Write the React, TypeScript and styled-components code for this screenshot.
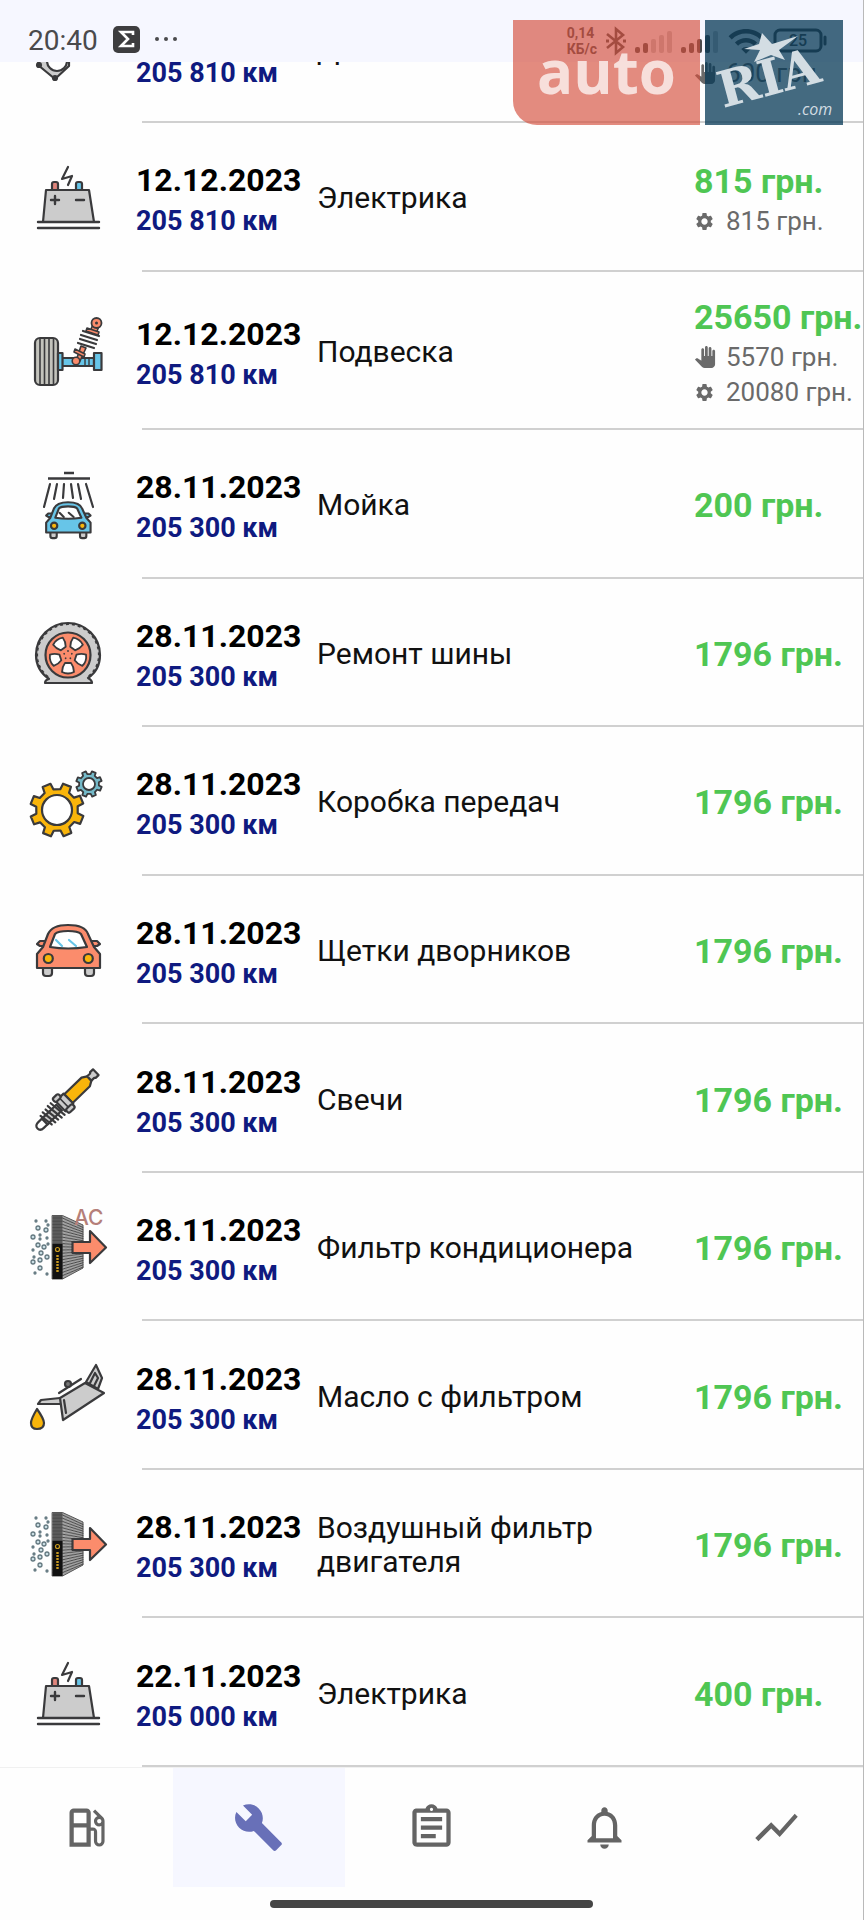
import React from 'react'
import styled, { createGlobalStyle } from 'styled-components'
import {
  MdBuild,
  MdNotificationsNone,
  MdOutlineAssignment,
  MdOutlineLocalGasStation,
  MdPanTool,
  MdSettings,
  MdShowChart,
  MdWifi,
} from 'react-icons/md'

const COLORS = {
  ink: '#3a3a3c',
  grey: '#cccccc',
  coral: '#fb8c6c',
  blue: '#67c5e8',
  teal: '#74b9c8',
  yellow: '#f9b50b',
  green: '#4fc653',
  navy: '#0f1a80',
  muted: '#6a6a6a',
  tint: '#f6f7ff',
  divider: '#d0d0d0',
}

const GlobalStyle = createGlobalStyle`
  * {
    box-sizing: border-box;
  }

  body {
    margin: 0;
    background: #fefefe;
    font-family: Roboto, 'Liberation Sans', sans-serif;
  }
`

const Page = styled.div`
  position: relative;
  display: flex;
  flex-direction: column;
  min-height: 100vh;
  overflow: hidden;
  border-right: 1px solid #b9b9b9;
`

const StatusBar = styled.header`
  display: flex;
  align-items: center;
  justify-content: space-between;
  height: 62px;
  padding: 20px 36px 0 28px;
  background: ${COLORS.tint};
  color: #4a4a4c;
`

const StatusGroup = styled.div<{ $gap: number }>`
  display: flex;
  align-items: center;
  gap: ${({ $gap }) => $gap}px;
`

const Clock = styled.time`
  font-size: 28px;
  line-height: 32px;
`

const Speed = styled.div`
  font-size: 14px;
  font-weight: 700;
  line-height: 16px;
`

const Watermark = styled.div`
  position: absolute;
  top: 20px;
  right: 20px;
  display: flex;
  gap: 5px;
  height: 105px;
`

const AutoBox = styled.div`
  display: flex;
  align-items: center;
  justify-content: center;
  width: 187px;
  padding-bottom: 4px;
  border-bottom-left-radius: 24px;
  background: rgba(212, 77, 58, 0.65);
  color: rgba(255, 255, 255, 0.72);
  font-family: 'Open Sans', sans-serif;
  font-size: 60px;
  font-weight: 700;
  line-height: 84px;
`

const RiaBox = styled.div`
  width: 138px;
  background: rgba(6, 56, 85, 0.75);
`

const List = styled.ul`
  display: flex;
  flex: 1;
  flex-direction: column;
  margin: 0;
  padding: 0;
  list-style: none;
`

const Item = styled.li<{ $scrolled?: boolean }>`
  display: flex;
  flex: ${({ $scrolled }) => ($scrolled ? '0 0 61px' : '1 0 auto')};
  flex-direction: column;
  justify-content: flex-end;
  overflow: hidden;
`

const Row = styled.div`
  display: grid;
  flex: 1 0 auto;
  grid-template-columns: 136px 181px minmax(0, 1fr) 169px;
  align-items: center;
  min-height: 146px;
  padding: 22px 0 18px;
`

const Divider = styled.div`
  flex: none;
  height: 2px;
  margin-left: 142px;
  background: ${COLORS.divider};
`

const IconCell = styled.div`
  padding: 0 0 4px 26px;

  svg {
    display: block;
  }
`

const When = styled.div`
  padding-top: 4px;
  white-space: nowrap;
`

const DateText = styled.div`
  min-height: 42px;
  color: #000;
  font-size: 32px;
  font-weight: 700;
  line-height: 42px;
`

const Mileage = styled.div`
  color: ${COLORS.navy};
  font-size: 27px;
  font-weight: 700;
  line-height: 40px;
`

const Name = styled.div`
  color: #111;
  font-size: 30px;
  line-height: 34px;
`

const Price = styled.div`
  min-height: 46px;
  color: ${COLORS.green};
  font-size: 34px;
  font-weight: 700;
  line-height: 46px;
  white-space: nowrap;
`

const Part = styled.div`
  display: grid;
  grid-template-columns: 32px auto;
  align-items: center;
  justify-content: start;
  color: ${COLORS.muted};
  font-size: 26px;
  line-height: 35px;
  white-space: nowrap;
`

const Nav = styled.nav`
  display: flex;
  height: 120px;
  border-top: 1px solid #f0f0f0;
`

const Tab = styled.button<{ $active?: boolean }>`
  display: flex;
  flex: 1;
  align-items: center;
  justify-content: center;
  border: 0;
  background: ${({ $active }) => ($active ? COLORS.tint : 'transparent')};
  color: ${({ $active }) => ($active ? '#6870b8' : '#646464')};
`

const Gesture = styled.div`
  display: flex;
  justify-content: center;
  padding: 13px 0 12px;
`

const Handle = styled.div`
  width: 37.5%;
  height: 8px;
  border-radius: 4px;
  background: #454545;
`

function Icon({ children }: { children: React.ReactNode }) {
  return (
    <svg
      width="84"
      height="84"
      viewBox="0 0 84 84"
      fill="none"
      stroke={COLORS.ink}
      strokeWidth="2.2"
      strokeLinecap="round"
      strokeLinejoin="round"
    >
      {children}
    </svg>
  )
}

function ChainIcon() {
  return (
    <Icon>
      <path d="M12 59 L29 73 L43 60 V45 H14 Z" fill={COLORS.grey} />
      <circle cx="31" cy="55" r="10" fill="#fff" />
      <circle cx="13" cy="59" r="2" fill={COLORS.ink} />
      <circle cx="29" cy="72" r="2" fill={COLORS.ink} />
    </Icon>
  )
}

function BatteryIcon() {
  return (
    <Icon>
      <path d="M26 36 V30 Q26 28 28 28 H30 Q32 28 32 30 V36" fill="#e0857c" />
      <path d="M50 36 V30 Q50 28 52 28 H54 Q56 28 56 30 V36" fill={COLORS.blue} />
      <path d="M20 36 H63 L68 68 H17 Z" fill={COLORS.grey} />
      <path d="M12 68 H73 M12 74 H73 M25 46 H33 M29 42 V50 M50 46 H58" strokeWidth="2.4" />
      <path d="M42 13 L36 25 L46 22 L42 31" />
    </Icon>
  )
}

function SuspensionIcon() {
  return (
    <Icon>
      <rect x="9" y="30" width="23" height="47" rx="5" fill="#c3c3bc" />
      <path d="M14 31 V76 M18.5 30 V77 M23 30 V77 M27.5 31 V76" strokeWidth="1.6" />
      <rect x="36" y="50" width="32" height="8" fill={COLORS.blue} />
      <rect x="32" y="45" width="4.5" height="17" fill={COLORS.blue} />
      <rect x="68" y="45" width="7.5" height="17" fill={COLORS.blue} />
      <path d="M59 50 V58 M63 50 V58" strokeWidth="1.4" />
      <path d="M51 50 L55 38 L60 40 L54 53 Z" fill={COLORS.coral} strokeWidth="1.6" />
      <path d="M49 41 L59 46 L58 49 L48 44 Z" fill={COLORS.coral} strokeWidth="1.6" />
      <circle cx="50" cy="53" r="3.8" fill={COLORS.coral} strokeWidth="1.6" />
      <path d="M57 23 L73 28 M55 27 L71 32 M54 31 L70 36 M52 35 L68 40" />
      <path d="M64 24 L67 16 L73 18 L70 26 Z" fill={COLORS.coral} strokeWidth="1.6" />
      <path d="M61 20 L73 24 L72 27 L60 23 Z" fill={COLORS.coral} strokeWidth="1.6" />
      <circle cx="70.5" cy="15" r="5" fill={COLORS.coral} strokeWidth="1.8" />
      <circle cx="70.5" cy="15" r="1.5" fill={COLORS.ink} stroke="none" />
    </Icon>
  )
}

function Car({ color }: { color: string }) {
  return (
    <g>
      <path
        d="M17 61 V66 Q17 69 20 69 H23 Q26 69 26 66 V61 M59 61 V66 Q59 69 62 69 H65 Q68 69 68 66 V61"
        fill={COLORS.grey}
      />
      <path d="M20 34 H14 L11 37 L14 39 H20 M65 34 H71 L74 37 L71 39 H65" fill={color} />
      <path d="M11 61 V47 L17 40 L22 27 Q26 18 42 18 Q59 18 62 27 L68 40 L74 47 V61 Z" fill={color} />
      <path d="M24 40 L29 27 Q32 24 42 24 Q52 24 55 27 L61 40 Q42 43 24 40 Z" fill="#fff" />
      <path d="M30 33 L36 39 M43 33 L50 39" stroke={color === COLORS.blue ? COLORS.ink : COLORS.blue} />
      <circle cx="22.3" cy="51.5" r="4.5" fill={COLORS.yellow} />
      <circle cx="62.3" cy="51.5" r="4.5" fill={COLORS.yellow} />
    </g>
  )
}

function WashIcon() {
  return (
    <Icon>
      <path d="M38 12 H48 M22 17.5 H64" strokeWidth="2.6" strokeLinecap="butt" />
      <path d="M24 23 L18 46 M31 23 L28 38 M38 23 L37 37 M45 23 L47 37 M52 23 L55 38 M60 23 L67 46" />
      <g transform="translate(12.4 28.5) scale(0.705)" strokeWidth="3">
        <Car color={COLORS.blue} />
      </g>
    </Icon>
  )
}

function CarIcon() {
  return (
    <Icon>
      <Car color={COLORS.coral} />
    </Icon>
  )
}

function TyreIcon() {
  return (
    <Icon>
      <path
        d="M23 69 Q10 60 10 45 A32 32 0 0 1 74 45 Q74 60 62 68 Q66 70 66 73 H19 Q19 70 23 69 Z"
        fill={COLORS.grey}
      />
      <path d="M22 67 Q11 58 11 45 A31 31 0 0 1 73 45 Q73 58 62 67" strokeDasharray="3 3" strokeLinecap="butt" />
      <circle cx="42" cy="45" r="22.5" fill={COLORS.coral} />
      {[36, 108, 180, 252, 324].map((angle) => (
        <path
          key={angle}
          transform={`rotate(${angle} 42 45)`}
          d="M36 28 Q42 25 48 28 Q48 33 45 37 H39 Q36 33 36 28 Z"
          fill="#fff"
          strokeWidth="1.8"
        />
      ))}
      {[0, 72, 144, 216, 288].map((angle) => (
        <circle
          key={angle}
          transform={`rotate(${angle} 42 45)`}
          cx="42"
          cy="41"
          r="0.9"
          fill={COLORS.ink}
          stroke="none"
        />
      ))}
    </Icon>
  )
}

function gearPath(cx: number, cy: number, outer: number, inner: number) {
  const points: string[] = []
  for (let i = 0; i < 8; i += 1) {
    const steps: [number, number][] = [[-13, inner], [-9, outer], [9, outer], [13, inner]]
    steps.forEach(([shift, radius]) => {
      const angle = ((i * 45 + 22 + shift) * Math.PI) / 180
      points.push(`${(cx + radius * Math.cos(angle)).toFixed(2)} ${(cy + radius * Math.sin(angle)).toFixed(2)}`)
    })
  }
  return `M${points.join(' L')} Z`
}

function GearsIcon() {
  return (
    <Icon>
      <path d={gearPath(31, 52, 27, 21)} fill={COLORS.yellow} />
      <circle cx="31" cy="52" r="15" fill="#fff" />
      <path d={gearPath(63, 26, 13, 10)} fill={COLORS.teal} strokeWidth="1.8" />
      <circle cx="63" cy="26" r="6" fill="#fff" strokeWidth="1.8" />
    </Icon>
  )
}

function SparkPlugIcon() {
  return (
    <Icon>
      <g transform="translate(41 44) rotate(-44)">
        <path d="M-29 -4 H-36 Q-41 -4 -41 0 Q-41 4 -36 4 H-29" fill="#fff" />
        <rect x="-31" y="-4" width="20" height="8" fill={COLORS.grey} />
        <path d="M-30 -7 L-28 7 M-26 -8 L-24 8 M-22 -8 L-20 8 M-18 -9 L-16 9 M-14 -9 L-12 9" />
        <path d="M2 -6 H26 L31 -3 V3 L26 6 H2 Z" fill={COLORS.yellow} />
        <path d="M31 -3 H35 L36 -4 H40 V4 H36 L35 3 H31 Z" fill={COLORS.grey} />
        <rect x="-9" y="-7" width="11" height="14" fill={COLORS.grey} />
        <rect x="-10" y="-11" width="8" height="5" rx="2" fill={COLORS.grey} />
        <rect x="-8" y="6" width="9" height="5" rx="2" fill={COLORS.grey} />
        <path d="M-4 -6 V6" strokeWidth="1.6" />
      </g>
    </Icon>
  )
}

// x, y, radius of each speck in front of the filter
const DUST: [number, number, number][] = [
  [10, 17, 1], [20, 17, 1], [22, 21, 1], [12, 24, 2], [20, 26, 2], [14, 31, 1], [7, 33, 2],
  [14, 35, 1], [21, 34, 1], [12, 41, 2], [22, 40, 1], [18, 43, 2], [7, 46, 1], [15, 49, 2],
  [8, 53, 1], [21, 53, 2], [14, 56, 2], [7, 58, 2], [14, 64, 2], [9, 69, 1], [21, 70, 1],
]

function FilterIcon({ label }: { label?: string }) {
  return (
    <Icon>
      {DUST.map(([x, y, r]) => (
        <circle key={`${x}-${y}`} cx={x} cy={y} r={r} stroke="#62777f" fill="#c9dde3" strokeWidth="1.3" />
      ))}
      <path d="M26.5 11.5 H36.5 L57 21 V64 L36.5 75 H26.5 Z" fill="#a4a4a4" stroke="#555" strokeWidth="1" />
      <path d="M26.5 11.5 H36.5 V75 H26.5 Z" fill="#5c5c5c" stroke="none" />
      {Array.from({ length: 19 }, (_, i) => (
        <path
          key={i}
          d={`M27 ${14 + i * 3.2} H36.5 L57 ${23.5 + i * 2.2}`}
          stroke="#4a4a4a"
          strokeWidth="1"
        />
      ))}
      {[40, 44, 48, 52].map((x) => (
        <path key={x} d={`M${x} ${13 + (x - 36) / 2} V${74 - (x - 36) / 2}`} stroke="#888" strokeWidth="0.6" />
      ))}
      <rect x="26.5" y="40" width="10" height="35" fill="#111" stroke="none" />
      <circle cx="31.5" cy="45.5" r="2" stroke="#c99b21" strokeWidth="1.2" />
      <path d="M31.5 51 V69" stroke="#c99b21" strokeWidth="2.4" strokeDasharray="2 1" strokeLinecap="butt" />
      {label && (
        <text x="48" y="21" fill="#b57f79" stroke="none" fontFamily="Inter, sans-serif" fontSize="21" fontWeight="500">
          {label}
        </text>
      )}
      <path d="M46.5 38 H64 V27 L80 43.5 L64 59 V49 H46.5 Z" fill={COLORS.coral} />
    </Icon>
  )
}

function OilIcon() {
  return (
    <Icon>
      <path d="M60 29 L70 12 L76 25 L72 36 Z" fill={COLORS.grey} />
      <path d="M64 30 L69 20 L72 25 L68 33" />
      <path d="M34 45 L15 47 L12 51 H34" fill={COLORS.grey} />
      <path d="M34 45 L59 30 L78 40 L37 67 Z" fill={COLORS.grey} />
      <path d="M38 47 L40 60 M33 40 L55 26" />
      <circle cx="42" cy="31" r="3" fill="#777" />
      <path d="M11 56 Q5 66 5 70 Q5 76 11 76 Q18 76 18 70 Q18 66 11 56 Z" fill={COLORS.yellow} />
    </Icon>
  )
}

function Bluetooth() {
  return (
    <svg width="22" height="30" viewBox="0 0 22 30" fill="none" stroke="currentColor" strokeWidth="2.6">
      <path d="M2 8 L18 21 L11 27 V3 L18 9 L2 22" />
      <path d="M1 15 H4 M18 15 H21" strokeWidth="3" />
    </svg>
  )
}

function Signal({ level }: { level: number }) {
  return (
    <svg width="38" height="24" viewBox="0 0 38 24" fill="currentColor">
      {[0, 1, 2, 3, 4].map((i) => (
        <rect key={i} x={i * 8} y={18 - i * 4} width="5" height={6 + i * 4} rx="2" opacity={i < level ? 1 : 0.3} />
      ))}
    </svg>
  )
}

function Battery() {
  return (
    <svg width="54" height="26" viewBox="0 0 54 26" fill="none" stroke="currentColor">
      <rect x="2" y="2" width="46" height="21" rx="5" strokeWidth="3" />
      <path d="M52 9 V16" strokeWidth="3" strokeLinecap="round" />
      <text x="25" y="18" fill="currentColor" stroke="none" fontSize="16" fontWeight="500" textAnchor="middle">
        25
      </text>
    </svg>
  )
}

interface Entry {
  icon: React.ReactNode
  date?: string
  mileage: string
  name: string
  price?: string
  work?: string
  parts?: string
}

const entries: Entry[] = [
  { icon: <ChainIcon />, mileage: '205 810 км', name: 'Двигатель', work: '600 грн.' },
  { icon: <BatteryIcon />, date: '12.12.2023', mileage: '205 810 км', name: 'Электрика', price: '815 грн.', parts: '815 грн.' },
  {
    icon: <SuspensionIcon />,
    date: '12.12.2023',
    mileage: '205 810 км',
    name: 'Подвеска',
    price: '25650 грн.',
    work: '5570 грн.',
    parts: '20080 грн.',
  },
  { icon: <WashIcon />, date: '28.11.2023', mileage: '205 300 км', name: 'Мойка', price: '200 грн.' },
  { icon: <TyreIcon />, date: '28.11.2023', mileage: '205 300 км', name: 'Ремонт шины', price: '1796 грн.' },
  { icon: <GearsIcon />, date: '28.11.2023', mileage: '205 300 км', name: 'Коробка передач', price: '1796 грн.' },
  { icon: <CarIcon />, date: '28.11.2023', mileage: '205 300 км', name: 'Щетки дворников', price: '1796 грн.' },
  { icon: <SparkPlugIcon />, date: '28.11.2023', mileage: '205 300 км', name: 'Свечи', price: '1796 грн.' },
  { icon: <FilterIcon label="AC" />, date: '28.11.2023', mileage: '205 300 км', name: 'Фильтр кондиционера', price: '1796 грн.' },
  { icon: <OilIcon />, date: '28.11.2023', mileage: '205 300 км', name: 'Масло с фильтром', price: '1796 грн.' },
  { icon: <FilterIcon />, date: '28.11.2023', mileage: '205 300 км', name: 'Воздушный фильтр двигателя', price: '1796 грн.' },
  { icon: <BatteryIcon />, date: '22.11.2023', mileage: '205 000 км', name: 'Электрика', price: '400 грн.' },
]

const tabs = [
  { label: 'Заправки', Glyph: MdOutlineLocalGasStation },
  { label: 'Сервис', Glyph: MdBuild },
  { label: 'Заметки', Glyph: MdOutlineAssignment },
  { label: 'Напоминания', Glyph: MdNotificationsNone },
  { label: 'Статистика', Glyph: MdShowChart },
]

function EntryRow({ entry, scrolled }: { entry: Entry; scrolled?: boolean }) {
  return (
    <Item $scrolled={scrolled}>
      <Row>
        <IconCell>{entry.icon}</IconCell>
        <When>
          <DateText>{entry.date}</DateText>
          <Mileage>{entry.mileage}</Mileage>
        </When>
        <Name>{entry.name}</Name>
        <div>
          <Price>{entry.price}</Price>
          {entry.work && (
            <Part>
              <MdPanTool size={22} />
              {entry.work}
            </Part>
          )}
          {entry.parts && (
            <Part>
              <MdSettings size={21} />
              {entry.parts}
            </Part>
          )}
        </div>
      </Row>
      <Divider />
    </Item>
  )
}

export default function App() {
  return (
    <Page>
      <GlobalStyle />
      <StatusBar>
        <StatusGroup $gap={15}>
          <Clock>20:40</Clock>
          <svg width="68" height="32" viewBox="0 0 68 32">
            <rect y="1" width="27" height="27" rx="5" fill="#3d3d3f" />
            <path d="M20 10 V7 H8 L15 14 L8 21 H20 V18" fill="none" stroke="#fff" strokeWidth="2.6" />
            <circle cx="44" cy="14" r="2" fill="#4a4a4c" />
            <circle cx="53" cy="14" r="2" fill="#4a4a4c" />
            <circle cx="62" cy="14" r="2" fill="#4a4a4c" />
          </svg>
        </StatusGroup>
        <StatusGroup $gap={8}>
          <Speed>
            0,14
            <br />
            КБ/с
          </Speed>
          <Bluetooth />
          <Signal level={2} />
          <Signal level={4} />
          <MdWifi size={38} />
          <Battery />
        </StatusGroup>
      </StatusBar>
      <List>
        {entries.map((entry, index) => (
          <EntryRow key={index} entry={entry} scrolled={index === 0} />
        ))}
      </List>
      <Nav>
        {tabs.map(({ label, Glyph }, index) => (
          <Tab key={label} type="button" aria-label={label} $active={index === 1}>
            <Glyph size={51} />
          </Tab>
        ))}
      </Nav>
      <Gesture>
        <Handle />
      </Gesture>
      <Watermark>
        <AutoBox>auto</AutoBox>
        <RiaBox>
          <svg width="138" height="105" viewBox="0 0 138 105" fill="#d3dde3">
            <path d="M57 13 L67 24 L93 16 L74 30 L80 40 L66 35 L49 42 L55 30 L39 29 L54 24 Z" />
            <text
              transform="translate(18 88) rotate(-15)"
              fontFamily="'DejaVu Serif', 'Liberation Serif', serif"
              fontSize="50"
              fontWeight="700"
            >
              RIA
            </text>
            <text x="93" y="95" fontFamily="'Open Sans', sans-serif" fontSize="16" fontStyle="italic">
              .com
            </text>
          </svg>
        </RiaBox>
      </Watermark>
    </Page>
  )
}
